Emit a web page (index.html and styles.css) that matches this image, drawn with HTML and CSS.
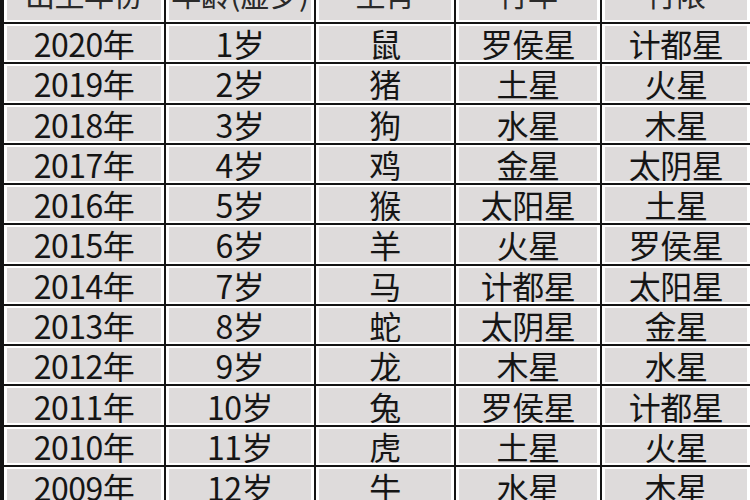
FILE: index.html
```html
<!DOCTYPE html>
<html lang="zh">
<head>
<meta charset="utf-8">
<link rel="stylesheet" href="styles.css">
</head>
<body>
<div class="table">
  <div class="cell head"><span>出生年份</span></div>
  <div class="cell head"><span>年龄(虚岁)</span></div>
  <div class="cell head"><span>生肖</span></div>
  <div class="cell head"><span>行年</span></div>
  <div class="cell head"><span>行限</span></div>

  <div class="cell"><span>2020年</span></div><div class="cell"><span>1岁</span></div><div class="cell"><span>鼠</span></div><div class="cell"><span>罗侯星</span></div><div class="cell"><span>计都星</span></div>
  <div class="cell"><span>2019年</span></div><div class="cell"><span>2岁</span></div><div class="cell"><span>猪</span></div><div class="cell"><span>土星</span></div><div class="cell"><span>火星</span></div>
  <div class="cell"><span>2018年</span></div><div class="cell"><span>3岁</span></div><div class="cell"><span>狗</span></div><div class="cell"><span>水星</span></div><div class="cell"><span>木星</span></div>
  <div class="cell"><span>2017年</span></div><div class="cell"><span>4岁</span></div><div class="cell"><span>鸡</span></div><div class="cell"><span>金星</span></div><div class="cell"><span>太阴星</span></div>
  <div class="cell"><span>2016年</span></div><div class="cell"><span>5岁</span></div><div class="cell"><span>猴</span></div><div class="cell"><span>太阳星</span></div><div class="cell"><span>土星</span></div>
  <div class="cell"><span>2015年</span></div><div class="cell"><span>6岁</span></div><div class="cell"><span>羊</span></div><div class="cell"><span>火星</span></div><div class="cell"><span>罗侯星</span></div>
  <div class="cell"><span>2014年</span></div><div class="cell"><span>7岁</span></div><div class="cell"><span>马</span></div><div class="cell"><span>计都星</span></div><div class="cell"><span>太阳星</span></div>
  <div class="cell"><span>2013年</span></div><div class="cell"><span>8岁</span></div><div class="cell"><span>蛇</span></div><div class="cell"><span>太阴星</span></div><div class="cell"><span>金星</span></div>
  <div class="cell"><span>2012年</span></div><div class="cell"><span>9岁</span></div><div class="cell"><span>龙</span></div><div class="cell"><span>木星</span></div><div class="cell"><span>水星</span></div>
  <div class="cell"><span>2011年</span></div><div class="cell"><span>10岁</span></div><div class="cell"><span>兔</span></div><div class="cell"><span>罗侯星</span></div><div class="cell"><span>计都星</span></div>
  <div class="cell"><span>2010年</span></div><div class="cell"><span>11岁</span></div><div class="cell"><span>虎</span></div><div class="cell"><span>土星</span></div><div class="cell"><span>火星</span></div>
  <div class="cell"><span>2009年</span></div><div class="cell"><span>12岁</span></div><div class="cell"><span>牛</span></div><div class="cell"><span>水星</span></div><div class="cell"><span>木星</span></div>
</div>
</body>
</html>
```

FILE: styles.css
```css
html, body {
  margin: 0;
  padding: 0;
  width: 750px;
  height: 500px;
  overflow: hidden;
  background: #fff;
}

.table {
  display: grid;
  grid-template-columns: 160px 148px 138px 144px 148px;
  grid-template-rows: 22px repeat(11, 38.27px) 40px;
  gap: 2px;
  padding-left: 4px;
  background: #141414;
  width: 746px;
  height: 510px;
}

.cell {
  background: #fff;
  padding: 2px 3px;
  display: flex;
  overflow: hidden;
}

.cell span {
  flex: 1;
  background: #dedbdb;
  display: flex;
  align-items: center;
  justify-content: center;
  font-family: "Noto Sans CJK SC", "Noto Sans", sans-serif;
  font-size: 32px;
  line-height: 1;
  color: #151515;
  letter-spacing: -0.5px;
  overflow: hidden;
  white-space: nowrap;
}

.head {
  padding-top: 0;
}

.head span {
  align-items: flex-end;
  padding-bottom: 12px;
  font-size: 30px;
  color: #2a2a2a;
}
```
